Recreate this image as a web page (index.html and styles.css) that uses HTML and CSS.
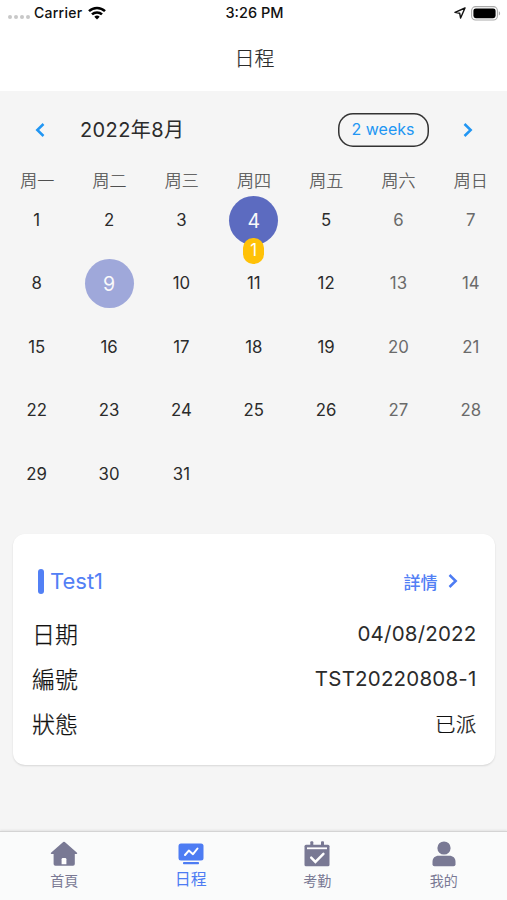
FILE: index.html
```html
<!DOCTYPE html>
<html lang="zh-Hant">
<head>
    <meta charset="UTF-8">
    <meta name="viewport" content="width=device-width, initial-scale=1.0">
    <title>日程</title>
    <link rel="stylesheet" href="styles.css">
</head>
<body>
    <header>
        <div class="status-bar">
            <div class="carrier">
                <span class="signal"><i></i><i></i><i></i><i></i></span>
                <span>Carrier</span>
                <svg class="wifi" width="18" height="14" viewBox="0 0 18 14" fill="none" stroke="#000" stroke-width="2.5">
                    <path d="M1 5.1a11.6 11.6 0 0 1 16 0"/>
                    <path d="M4 8.4a7.2 7.2 0 0 1 10 0"/>
                    <path d="M9 13.6l-2.7-2.8a3.9 3.9 0 0 1 5.4 0z" fill="#000" stroke="none"/>
                </svg>
            </div>
            <div class="time">3:26 PM</div>
            <div class="battery-area">
                <svg width="12" height="12" viewBox="0 0 12 12" fill="none" stroke="#111" stroke-width="1.4" stroke-linejoin="round">
                    <path d="M11 1L1 5.4l4.7.9.9 4.7z"/>
                </svg>
                <svg width="30" height="15" viewBox="0 0 30 15">
                    <rect x=".6" y=".6" width="25.8" height="13.4" rx="4" fill="#fff" stroke="#aaa" stroke-width="1.1"/>
                    <rect x="2.4" y="2.4" width="22.2" height="9.8" rx="2.4"/>
                    <path d="M27.8 5.2c1.8.7 1.8 3.6 0 4.3z" fill="#aaa"/>
                </svg>
            </div>
        </div>
        <h1>日程</h1>
    </header>

    <main>
        <div class="calendar-header">
            <svg class="prev" width="10" height="14" viewBox="0 0 10 14"><path d="M8.5 1L2.3 7l6.2 6"/></svg>
            <span class="month">2022年8月</span>
            <button class="format-button">2 weeks</button>
            <svg class="next" width="10" height="14" viewBox="0 0 10 14"><path d="M1.5 1l6.2 6-6.2 6"/></svg>
        </div>

        <div class="weekdays">
            <span>周一</span><span>周二</span><span>周三</span><span>周四</span><span>周五</span><span>周六</span><span>周日</span>
        </div>

        <div class="days">
            <span>1</span><span>2</span><span>3</span>
            <span class="selected">4<b class="badge">1</b></span>
            <span>5</span><span class="weekend">6</span><span class="weekend">7</span>

            <span>8</span><span class="today">9</span><span>10</span><span>11</span>
            <span>12</span><span class="weekend">13</span><span class="weekend">14</span>

            <span>15</span><span>16</span><span>17</span><span>18</span>
            <span>19</span><span class="weekend">20</span><span class="weekend">21</span>

            <span>22</span><span>23</span><span>24</span><span>25</span>
            <span>26</span><span class="weekend">27</span><span class="weekend">28</span>

            <span>29</span><span>30</span><span>31</span>
        </div>

        <section class="card">
            <div class="card-header">
                <h2>Test1</h2>
                <a class="details">詳情
                    <svg width="10" height="14" viewBox="0 0 10 14"><path d="M1.5 1l6.2 6-6.2 6"/></svg>
                </a>
            </div>
            <div class="row"><span class="label">日期</span><span>04/08/2022</span></div>
            <div class="row"><span class="label">編號</span><span>TST20220808-1</span></div>
            <div class="row"><span class="label">狀態</span><span class="state">已派</span></div>
        </section>
    </main>

    <nav>
        <a>
            <svg width="28" height="26" viewBox="0 0 28 26">
                <path d="M13.2 1a1.2 1.2 0 0 1 1.6 0L27 11.8c.5.5.2 1.2-.4 1.2h-1.8v10a1.8 1.8 0 0 1-1.8 1.8H5.4A1.8 1.8 0 0 1 3.6 23V13H1.4c-.6 0-.9-.7-.4-1.2z"/>
                <path d="M11.6 23.3v-5a1.3 1.3 0 0 1 1.3-1.3h2.2a1.3 1.3 0 0 1 1.3 1.3v5z" fill="#fff"/>
            </svg>
            <span>首頁</span>
        </a>
        <a class="active">
            <svg width="28" height="26" viewBox="0 0 28 26">
                <rect x="1.5" y="2.5" width="25" height="17" rx="2.5"/>
                <rect x="6" y="21" width="16" height="2.2" rx=".8"/>
                <path d="M8 14l3.8-4.4 4.2 3.6L20.5 7.5" fill="none" stroke="#fff" stroke-width="2" stroke-linecap="round" stroke-linejoin="round"/>
            </svg>
            <span>日程</span>
        </a>
        <a>
            <svg width="28" height="26" viewBox="0 0 28 26">
                <rect x="7.3" y=".2" width="3" height="6" rx="1"/>
                <rect x="18" y=".2" width="3" height="6" rx="1"/>
                <rect x="1.5" y="3.8" width="25" height="21.4" rx="1.5"/>
                <path d="M4 6.4h20v1.8H4z" fill="#fff"/>
                <path d="M8.2 16.6l4.2 4.3 8-8" fill="none" stroke="#fff" stroke-width="2.5" stroke-linecap="round"/>
            </svg>
            <span>考勤</span>
        </a>
        <a>
            <svg width="28" height="26" viewBox="0 0 28 26">
                <circle cx="14" cy="7" r="6.6"/>
                <path d="M2.5 21c0-4 2.5-6.2 6.2-6.2h10.6c3.7 0 6.2 2.2 6.2 6.2v2.2a2 2 0 0 1-2 2h-19a2 2 0 0 1-2-2z"/>
            </svg>
            <span>我的</span>
        </a>
    </nav>
</body>
</html>
```
FILE: styles.css
```css
* {
    box-sizing: border-box;
}

body {
    margin: 0;
    height: 900px;
    display: flex;
    flex-direction: column;
    overflow: hidden;
    background: #f5f5f5;
    color: #2b2b2b;
    font-family: Inter, "Noto Sans CJK TC", sans-serif;
}

header {
    height: 91px;
    background: #fff;
}

/* Status bar */
.status-bar {
    height: 26px;
    padding: 0 6px 0 8px;
    display: grid;
    grid-template-columns: 1fr auto 1fr;
    align-items: center;
    font-size: 14px;
    line-height: 18px;
    font-weight: 500;
    color: #111;
}

.carrier {
    display: flex;
    align-items: center;
    letter-spacing: 0.25px;
}

.carrier > span,
.time {
    padding-bottom: 1px;
}

.time {
    font-size: 14.5px;
}

.signal {
    display: flex;
    gap: 2px;
    margin: 9px 4px 0 0;
}

.signal i {
    width: 4px;
    height: 4px;
    border-radius: 50%;
    background: #c8c8c8;
}

.wifi {
    margin-left: 6px;
}

.battery-area {
    display: flex;
    justify-content: flex-end;
    align-items: center;
    gap: 5px;
}

h1 {
    margin: 0;
    padding-left: 2px;
    font-size: 20px;
    font-weight: 300;
    line-height: 66px;
    text-align: center;
    -webkit-text-stroke: 0.2px;
}

main {
    flex: 1;
}

/* Calendar */
.calendar-header {
    height: 77px;
    padding: 0 34px 0 35px;
    display: flex;
    align-items: center;
}

.calendar-header svg,
.details svg {
    fill: none;
    stroke: #2196f3;
    stroke-width: 2.5;
}

.month {
    flex: 1;
    margin-left: 35px;
    padding-bottom: 2px;
    font-size: 20px;
    letter-spacing: 0.4px;
}

.format-button {
    width: 91px;
    height: 34px;
    margin-right: 34px;
    padding: 0 1px 1px 0;
    background: none;
    border: none;
    box-shadow: inset 0 0 0 1.5px #333;
    border-radius: 15px;
    color: #2196f3;
    font-family: inherit;
    font-size: 16px;
}

.weekdays,
.days {
    display: grid;
    grid-template-columns: repeat(7, 1fr);
    text-align: center;
}

.weekdays {
    height: 20px;
    padding-left: 1px;
    line-height: 27px;
    font-size: 17px;
    font-weight: 300;
    color: #4f4f4f;
    -webkit-text-stroke: 0.2px;
}

.days {
    grid-auto-rows: 63.5px;
    align-items: center;
    justify-items: center;
    padding-left: 0.5px;
    font-size: 16.8px;
}

.weekend {
    color: #6a6a6a;
}

.selected,
.today {
    position: relative;
    width: 49px;
    height: 49px;
    line-height: 50px;
    border-radius: 50%;
    background: #5c6bc0;
    color: #fafafa;
    font-size: 19.5px;
}

.selected {
    margin-top: 1px;
}

.today {
    background: #9fa8da;
}

.badge {
    position: absolute;
    left: 14px;
    bottom: -19px;
    width: 21px;
    height: 26px;
    line-height: 25px;
    border-radius: 10px;
    background: #ffc107;
    color: #fff;
    font-size: 16.8px;
    font-weight: 400;
}

/* Schedule card */
.card {
    height: 231px;
    margin: 28px 12px 0 13px;
    padding: 25px 18.5px 0 19px;
    background: #fff;
    border-radius: 12px;
    box-shadow: 0 1px 2px rgba(0, 0, 0, 0.12);
}

.card-header {
    height: 45px;
    padding: 0 19px 0 5.5px;
    display: flex;
    align-items: center;
    justify-content: space-between;
    color: #5280f5;
}

h2 {
    margin: 0;
    display: flex;
    align-items: center;
    gap: 6.5px;
    font-size: 22px;
    font-weight: 400;
}

h2::before {
    content: "";
    width: 6px;
    height: 25px;
    border-radius: 3px;
    background: #5280f5;
}

.details {
    display: flex;
    align-items: center;
    gap: 10px;
    font-size: 17px;
    font-weight: 500;
}

.details svg {
    stroke: #4d7cf3;
}

/* Rows */
.row {
    height: 45px;
    display: flex;
    align-items: center;
    justify-content: space-between;
    font-size: 20.5px;
    letter-spacing: 0.2px;
}

.card-header + .row {
    margin-top: 7px;
}

.label {
    padding-bottom: 1px;
    font-size: 23px;
    letter-spacing: 0;
}

.label,
.state {
    font-weight: 300;
    color: #111;
    -webkit-text-stroke: 0.25px;
}

/* Bottom tabs */
nav {
    height: 69px;
    padding: 9px 0 0 1px;
    display: grid;
    grid-template-columns: repeat(4, 1fr);
    background: #fafbfb;
    border-top: 1px solid #d4d4d4;
    box-shadow: 0 -1px 2px rgba(0, 0, 0, 0.08);
}

nav a {
    display: flex;
    flex-direction: column;
    align-items: center;
    color: #797994;
    font-size: 14px;
    line-height: 28px;
}

nav svg {
    fill: currentColor;
}

nav .active {
    color: #4d7cf3;
    font-size: 16px;
    line-height: 25px;
}
```
